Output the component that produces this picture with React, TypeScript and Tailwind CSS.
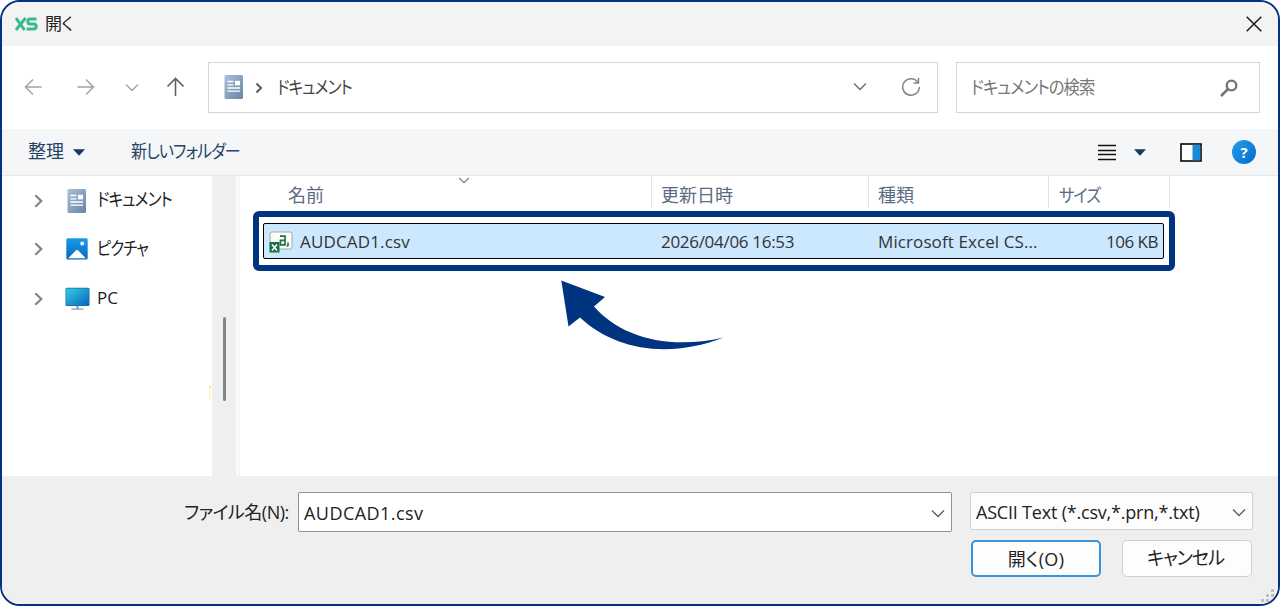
import React from "react";

interface LabelProps {
  className: string;
  children: React.ReactNode;
}

interface TreeItem {
  name: string;
  icon: React.ReactNode;
  rowClass: string;
  labelClass: string;
}

const Label = ({ className, children }: LabelProps) => (
  <span className={`inline-block whitespace-pre ${className}`}>{children}</span>
);

const DocumentIcon = () => (
  <svg width="20" height="26" viewBox="0 0 20 26" className="shrink-0">
    <defs>
      <linearGradient id="doc" x1="0" y1="0" x2="1" y2="1">
        <stop offset="0" stopColor="#a9c0d8" />
        <stop offset="1" stopColor="#6686ab" />
      </linearGradient>
    </defs>
    <rect x="0.5" y="1" width="18.5" height="24" rx="1.5" fill="url(#doc)" />
    <path
      d="M3.5 7.5h6M3.5 10.8h6M3.5 14h12.5M3.5 17.2h12.5"
      stroke="#fff"
      strokeWidth="1.3"
    />
    <rect x="11" y="6.8" width="5" height="4.6" fill="#fff" />
  </svg>
);

const PictureIcon = () => (
  <svg width="22" height="22" viewBox="0 0 22 22" className="shrink-0">
    <defs>
      <linearGradient id="pic" x1="0" y1="0" x2="0" y2="1">
        <stop offset="0" stopColor="#1b9be6" />
        <stop offset="1" stopColor="#0568bd" />
      </linearGradient>
    </defs>
    <rect x="0.3" y="0.3" width="21.4" height="21.2" rx="1.5" fill="url(#pic)" />
    <path d="M2.2 20.3 10 12.2q1-1 2 0l7.8 8.1z" fill="#fff" />
    <circle cx="16.2" cy="5.6" r="2" fill="#e4f4ff" />
  </svg>
);

const PcIcon = () => (
  <svg width="25" height="24" viewBox="0 0 25 24" className="shrink-0">
    <defs>
      <linearGradient id="pc" x1="0" y1="0" x2="1" y2="1">
        <stop offset="0" stopColor="#33cfdc" />
        <stop offset="1" stopColor="#0865c2" />
      </linearGradient>
    </defs>
    <path d="M11 18h3v4h-3z" fill="#a5b2bf" />
    <path d="M6.5 21.5h12v1.3h-12z" fill="#93a2b0" />
    <rect x="0.5" y="0.7" width="24" height="18.3" rx="1.5" fill="#0b70aa" />
    <rect x="1.2" y="1.4" width="22.6" height="16.8" rx="1" fill="url(#pc)" />
  </svg>
);

const CsvIcon = () => (
  <svg width="24" height="22" viewBox="0 0 24 22" className="shrink-0">
    <rect x="1" y="1" width="22" height="17" rx="2" fill="#fbfbf9" stroke="#a6a8aa" />
    <path
      d="M11 5.2h5v8.6h-4.500V9.400h4.500"
      fill="none"
      stroke="#207245"
      strokeWidth="1.7"
    />
    <path d="M19 11.5v3l-1.2 1" fill="none" stroke="#207245" strokeWidth="1.6" />
    <rect x="0.5" y="11" width="10" height="10.5" fill="#167341" />
    <path d="m3 13.5 5 6m0-6-5 6" stroke="#fff" strokeWidth="1.6" />
  </svg>
);

const ExpandChevron = () => (
  <svg width="10" height="16" viewBox="0 0 10 16" fill="none" className="shrink-0">
    <path d="m1.3 2.2 6 5.8-6 5.8" stroke="#858585" strokeWidth="2.2" />
  </svg>
);

const DownChevron = ({ className }: { className: string }) => (
  <svg width="14" height="9" viewBox="0 0 14 9" fill="none" className={className}>
    <path d="m1 1.5 6 6 6-6" stroke="currentColor" strokeWidth="1.4" />
  </svg>
);

const Triangle = () => (
  <svg width="12" height="7" viewBox="0 0 12 7" className="shrink-0">
    <path d="M0 .3h12L6 6.7z" fill="#163a63" />
  </svg>
);

const treeItems: TreeItem[] = [
  {
    name: "ドキュメント",
    icon: <DocumentIcon />,
    rowClass: "h-[49px]",
    labelClass: "text-[18px] tracking-[-1px] scale-x-[0.87]",
  },
  {
    name: "ピクチャ",
    icon: <PictureIcon />,
    rowClass: "h-[48px]",
    labelClass: "text-[18px] tracking-[-1px] scale-x-[0.85]",
  },
  {
    name: "PC",
    icon: <PcIcon />,
    rowClass: "h-[51px]",
    labelClass: "text-[17px] tracking-[0px]",
  },
];

const TitleBar = () => (
  <div className="flex h-[44px] shrink-0 items-center bg-[#f3f3f3] pb-px pl-[13px] pr-[16px]">
    <svg width="23" height="14" viewBox="0 0 23 14" fill="none">
      <path d="m1 1 8.5 12M10.5 1 1 13" stroke="#3cb98f" strokeWidth="3" />
      <path
        d="M21.5 2h-6.2q-2.5 0-2.5 2.4t2.5 2.5h3.4q2.5 0 2.5 2.5T18.7 12h-7.2"
        stroke="#3cb98f"
        strokeWidth="3"
      />
    </svg>
    <Label className="ml-[7px] text-[17px] tracking-[-0.5px] text-[#222]">開く</Label>
    <svg width="16" height="16" viewBox="0 0 16 16" className="ml-auto">
      <path d="m.7.7 14.6 14.6m0-14.6L.7 15.3" stroke="#1b1b1b" strokeWidth="1.5" />
    </svg>
  </div>
);

const NavBar = () => (
  <div className="flex h-[83px] shrink-0 items-center bg-white pl-[22px] pr-[18px]">
    <svg width="18" height="18" viewBox="0 0 18 18" fill="none" className="mb-px shrink-0">
      <path d="M17.5 9H1.500m7.500-7.500L1.500 9l7.500 7.500" stroke="#a3a3a3" strokeWidth="1.5" />
    </svg>
    <svg width="18" height="18" viewBox="0 0 18 18" fill="none" className="mb-px ml-[35px] shrink-0">
      <path d="M.5 9h16M9 1.500 16.500 9 9 16.500" stroke="#a3a3a3" strokeWidth="1.5" />
    </svg>
    <DownChevron className="mb-px ml-[30px] shrink-0 text-[#a3a3a3]" />
    <svg width="18" height="20" viewBox="0 0 18 20" fill="none" className="mb-px ml-[27px] shrink-0">
      <path d="M9.5 19V2M1.500 9.500l8-8 8 8" stroke="#616161" strokeWidth="1.6" />
    </svg>

    <div className="ml-[24px] flex h-[51px] w-[730px] shrink-0 items-center border border-[#d5d5d5] pb-[2px] pl-[15px] pr-[16px]">
      <DocumentIcon />
      <svg width="8" height="12" viewBox="0 0 8 12" fill="none" className="ml-[11px] mt-[2px]">
        <path d="m1.5 1.5 4.500 4.500-4.500 4.500" stroke="#5c5c5c" strokeWidth="2" />
      </svg>
      <Label className="ml-[14px] origin-left scale-x-[0.87] text-[18px] tracking-[-1px] text-[#444]">
        ドキュメント
      </Label>
      <DownChevron className="ml-auto text-[#6d6d6d]" />
      <svg width="20" height="20" viewBox="0 0 20 20" fill="none" className="ml-[34px]">
        <path d="M16.8 5.200A8.300 8.300 0 1 0 18.3 10M17.5 1v5h-5" stroke="#858585" strokeWidth="1.5" />
      </svg>
    </div>

    <div className="ml-[18px] flex h-[51px] flex-1 items-center border border-[#d5d5d5] pb-[2px] pl-[14px] pr-[21px]">
      <Label className="origin-left scale-x-[0.905] text-[18px] tracking-[-1px] text-[#777]">
        ドキュメントの検索
      </Label>
      <svg width="18" height="18" viewBox="0 0 18 18" fill="none" className="ml-auto mt-[2px]">
        <circle cx="11.5" cy="6.5" r="4.800" stroke="#737373" strokeWidth="2.3" />
        <path d="m8 10-7 7" stroke="#737373" strokeWidth="2.5" />
      </svg>
    </div>
  </div>
);

const Toolbar = () => (
  <div className="flex h-[47px] shrink-0 items-center border-b border-[#e6e7e8] bg-[#f4f6f8] pl-[26px] pr-[22px] text-[18px] text-[#274264]">
    <Label className="mb-[2px] tracking-[0px]">整理</Label>
    <div className="ml-[9px]">
      <Triangle />
    </div>
    <Label className="mb-[2px] ml-[46px] origin-left scale-x-[0.89] tracking-[-1px]">
      新しいフォルダー
    </Label>
    <svg width="18" height="17" viewBox="0 0 18 17" className="ml-auto">
      <path d="M0 1.5h18M0 6.500h18M0 10.500h18M0 15.5h18" stroke="#111" strokeWidth="1.5" />
    </svg>
    <div className="ml-[18px]">
      <Triangle />
    </div>
    <svg width="22" height="19" viewBox="0 0 22 19" className="ml-[34px]">
      <rect x="1" y="1" width="20" height="17" fill="#fff" stroke="#050505" strokeWidth="1.6" />
      <path d="M12.5 1.800h7.700v15.400h-7.700z" fill="#1b8bd9" />
    </svg>
    <div className="ml-[30px] flex h-[24px] w-[24px] items-center justify-center rounded-full bg-gradient-to-br from-[#299eea] to-[#006cce] text-[15px] font-bold text-white">
      ?
    </div>
  </div>
);

const NavigationTree = () => (
  <div className="relative w-[210px] shrink-0 bg-white text-[#222]">
    {treeItems.map((item) => (
      <div key={item.name} className={`flex items-center pl-[32px] ${item.rowClass}`}>
        <ExpandChevron />
        <div className="ml-[19px] flex w-[28px] justify-center">{item.icon}</div>
        <Label className={`mb-[3px] ml-[6px] origin-left ${item.labelClass}`}>
          {item.name}
        </Label>
      </div>
    ))}
    {/* Edge of a clipped folder icon */}
    <div className="absolute right-[1px] top-[210px] h-[13px] w-[2px] border-t-2 border-[#ffd68a] bg-[#fff9c4]" />
  </div>
);

const FileList = () => (
  <div className="relative flex-1 bg-white">
    <div className="flex h-[32px] text-[18px] text-[#5b6b82]">
      <div className="relative flex w-[412px] items-center border-r border-[#e2e2e2] pl-[48px] pt-[5px]">
        <Label className="tracking-[0px]">名前</Label>
        <svg
          width="12"
          height="7"
          viewBox="0 0 12 7"
          fill="none"
          className="absolute left-[218px] top-[1px]"
        >
          <path d="m1 1 5 4.500L11 1" stroke="#8a8a8a" strokeWidth="1.4" />
        </svg>
      </div>
      <div className="flex w-[217px] items-center border-r border-[#e2e2e2] pl-[9px] pt-[5px]">
        <Label className="tracking-[0px]">更新日時</Label>
      </div>
      <div className="flex w-[180px] items-center border-r border-[#e2e2e2] pl-[9px] pt-[5px]">
        <Label className="tracking-[0px]">種類</Label>
      </div>
      <div className="flex w-[121px] items-center border-r border-[#e2e2e2] pl-[10px] pt-[5px]">
        <Label className="origin-left scale-x-[0.9] tracking-[-1px]">サイズ</Label>
      </div>
    </div>

    {/* Selected file */}
    <div className="ml-[13px] mt-[3px] h-[60px] w-[922px] rounded-[6px] border-[6px] border-[#003380] py-[6px] pl-[4px] pr-[5px]">
      <div className="flex h-full items-center rounded-[2px] border border-black bg-[#cce8ff] text-[17px] text-[#333]">
        <div className="ml-[5px] mt-[2px]">
          <CsvIcon />
        </div>
        <Label className="ml-[7px] w-[361px] tracking-[0.15px]">AUDCAD1.csv</Label>
        <Label className="w-[217px] tracking-[-0.3px]">2026/04/06 16:53</Label>
        <Label className="tracking-[0.1px]">Microsoft Excel CS...</Label>
        <Label className="ml-auto mr-[5px] tracking-[-0.5px]">106 KB</Label>
      </div>
    </div>

    {/* Pointer to the selected file */}
    <svg
      width="164"
      height="72"
      viewBox="0 0 164 72"
      className="absolute left-[320px] top-[103px]"
    >
      <path
        d="M1.300 1.500 45 18 34 27.500C60 57.500 108 71.500 163.500 58.500 110 79.500 56 72 20 38.500L8.500 47.500z"
        fill="#003380"
      />
    </svg>
  </div>
);

const Footer = () => (
  <div className="relative flex-1 bg-[#efefef] pl-[182px] pt-[16px] text-[18px] text-[#222]">
    <div className="flex items-start">
      <Label className="w-[114px] pt-[11px] tracking-[-0.5px]">ファイル名(N):</Label>
      <div className="flex h-[40px] w-[654px] items-center rounded-[2px] border border-[#929292] bg-white pl-[5px] pr-[6px] pt-[2px]">
        <Label className="tracking-[0.45px]">AUDCAD1.csv</Label>
        <DownChevron className="ml-auto text-[#606060]" />
      </div>
      <div className="ml-[18px] flex h-[38px] w-[283px] items-center rounded-[2px] border border-[#d0d0d0] bg-[#fdfdfd] pl-[5px] pr-[6px] pt-[2px]">
        <Label className="tracking-[-0.2px]">ASCII Text (*.csv,*.prn,*.txt)</Label>
        <DownChevron className="ml-auto text-[#606060]" />
      </div>
    </div>
    <div className="absolute left-[969px] top-[64px] flex gap-[21px]">
      <button className="flex h-[37px] w-[130px] items-center justify-center rounded-[5px] border-2 border-[#3a94dc] bg-[#fdfdfd]">
        <Label className="tracking-[0.3px]">開く(O)</Label>
      </button>
      <button className="flex h-[37px] w-[130px] items-center justify-center rounded-[5px] border border-[#d0d0d0] bg-[#fdfdfd]">
        <Label className="mr-[3px] scale-x-[0.95] text-[19px] tracking-[-1px]">
          キャンセル
        </Label>
      </button>
    </div>
    <svg
      width="13"
      height="13"
      viewBox="0 0 13 13"
      className="absolute bottom-[2px] right-[4px]"
      fill="#bfbfbf"
    >
      <path d="M10 0h3v3h-3zM5 5h3v3H5zM10 5h3v3h-3zM0 10h3v3H0zM5 10h3v3H5zM10 10h3v3h-3z" />
    </svg>
  </div>
);

const App = () => (
  <div className="h-[606px] w-[1280px] overflow-hidden bg-white font-['Open_Sans','Noto_Sans_CJK_JP',sans-serif] leading-none [font-feature-settings:'palt']">
    <div className="flex h-full flex-col overflow-hidden rounded-[20px] border-2 border-[#003380]">
      <TitleBar />
      <NavBar />
      <Toolbar />
      <div className="flex h-[300px] shrink-0">
        <NavigationTree />
        <div className="w-[24px] shrink-0 bg-[#efefef] pl-[11px] pt-[141px]">
          <div className="h-[84px] w-[3px] rounded-full bg-[#858585]" />
        </div>
        <div className="w-[4px] shrink-0 border-r border-[#f3f3f3] bg-[#fafafa]" />
        <FileList />
      </div>
      <Footer />
    </div>
  </div>
);

export default App;
